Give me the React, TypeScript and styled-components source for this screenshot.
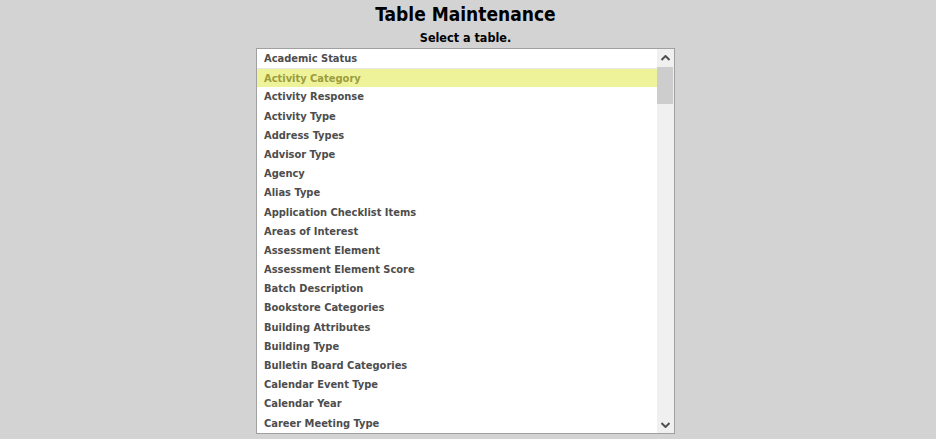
import { createGlobalStyle } from 'styled-components';
import styled from 'styled-components';

const GlobalStyle = createGlobalStyle`
  html, body {
    margin: 0;
    padding: 0;
    background: #d3d3d3;
  }
  body {
    font-family: "DejaVu Sans Condensed", "DejaVu Sans", "Liberation Sans", sans-serif;
    font-stretch: semi-condensed;
  }
`;

const Page = styled.div`
  display: flex;
  flex-direction: column;
  align-items: center;
  padding-right: 5px;
  height: 439px;
  overflow: hidden;
`;

const Title = styled.h1`
  margin: 2px 0 0;
  font-size: 19px;
  line-height: 24px;
  font-weight: bold;
  color: #000;
`;

const Subtitle = styled.div`
  margin-top: 4px;
  font-size: 12.5px;
  line-height: 16px;
  font-weight: bold;
  color: #000;
`;

const ListBox = styled.div`
  margin-top: 2px;
  width: 417px;
  height: 384px;
  border: 1px solid #a0a0a0;
  background: #fff;
  display: flex;
  overflow: hidden;
`;

const Options = styled.ul`
  flex: 1;
  margin: 0;
  padding: 0;
  list-style: none;
`;

const Option = styled.li<{ $selected?: boolean }>`
  height: 19.2px;
  line-height: 19.2px;
  padding-left: 7px;
  font-size: 11px;
  font-weight: bold;
  white-space: nowrap;
  color: ${p => (p.$selected ? '#9c9c3c' : '#4d4d4d')};
  background: ${p => (p.$selected ? '#eef39a' : 'transparent')};
  border-top: ${p => (p.$selected ? '1px solid #e8e8e8' : 'none')};
  box-sizing: border-box;
`;

const ScrollBar = styled.div`
  width: 17px;
  background: #f0f0f0;
  display: flex;
  flex-direction: column;
`;

const ArrowButton = styled.div`
  height: 17px;
  display: flex;
  align-items: center;
  justify-content: center;
  color: #505050;
`;

const Track = styled.div`
  flex: 1;
`;

const Thumb = styled.div`
  margin: 1px 1px 0 0;
  height: 37px;
  background: #cdcdcd;
`;

const tables = [
  'Academic Status',
  'Activity Category',
  'Activity Response',
  'Activity Type',
  'Address Types',
  'Advisor Type',
  'Agency',
  'Alias Type',
  'Application Checklist Items',
  'Areas of Interest',
  'Assessment Element',
  'Assessment Element Score',
  'Batch Description',
  'Bookstore Categories',
  'Building Attributes',
  'Building Type',
  'Bulletin Board Categories',
  'Calendar Event Type',
  'Calendar Year',
  'Career Meeting Type',
];

const Chevron = ({ up }: { up?: boolean }) => (
  <svg width="9" height="6" viewBox="0 0 9 6">
    <path
      d={up ? 'M0.5 5 L4.5 1 L8.5 5' : 'M0.5 1 L4.5 5 L8.5 1'}
      fill="none"
      stroke="currentColor"
      strokeWidth="2"
    />
  </svg>
);

const App = () => {
  const selected = 'Activity Category';
  return (
    <>
      <GlobalStyle />
      <Page>
        <Title>Table Maintenance</Title>
        <Subtitle>Select a table.</Subtitle>
        <ListBox>
          <Options>
            {tables.map(t => (
              <Option key={t} $selected={t === selected}>
                {t}
              </Option>
            ))}
          </Options>
          <ScrollBar>
            <ArrowButton>
              <Chevron up />
            </ArrowButton>
            <Track>
              <Thumb />
            </Track>
            <ArrowButton>
              <Chevron />
            </ArrowButton>
          </ScrollBar>
        </ListBox>
      </Page>
    </>
  );
};

export default App;
